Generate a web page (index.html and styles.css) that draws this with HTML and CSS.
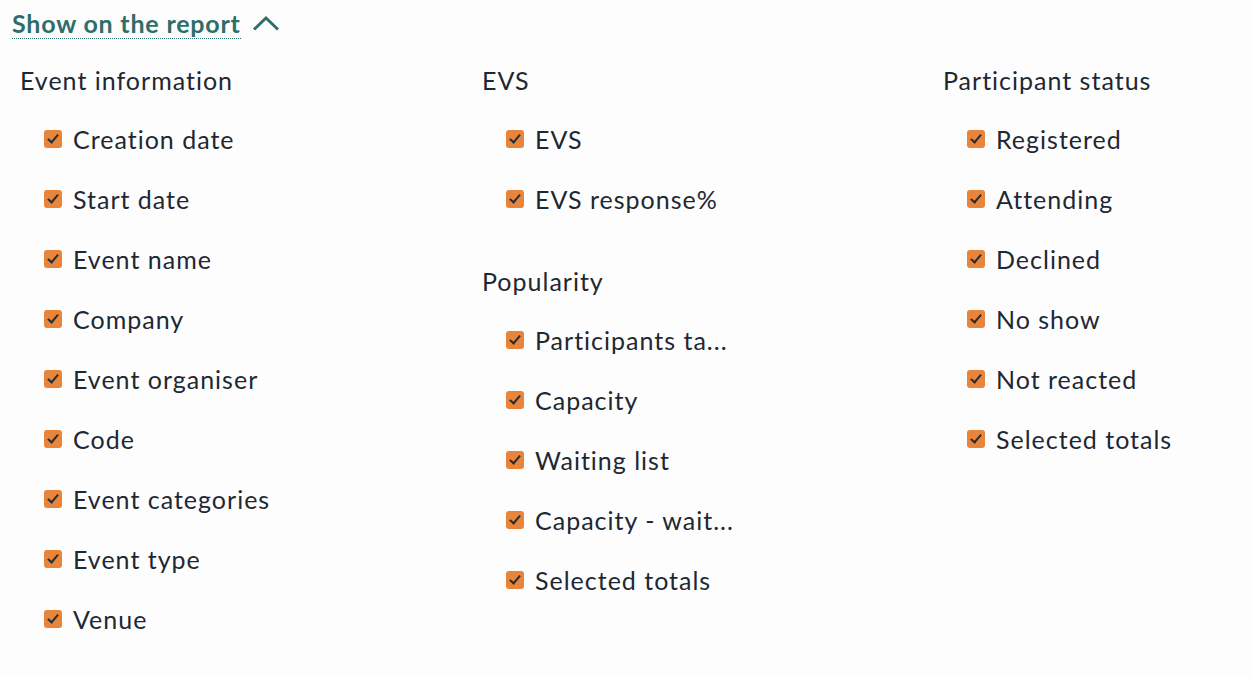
FILE: index.html
```html
<!DOCTYPE html>
<html>
<head>
<meta charset="utf-8">
<link rel="stylesheet" href="styles.css">
</head>
<body>
<div class="page">
  <div class="toggle">
    <span class="toggle-label">Show on the report</span>
    <svg class="chev" width="28" height="16" viewBox="0 0 28 16"><path d="M2 14.5 L14 3 L26 14.5" fill="none" stroke="#2e6e6a" stroke-width="3"/></svg>
  </div>
  <div class="cols">
    <div class="col">
      <div class="group">
        <div class="group-title">Event information</div>
        <div class="item"><span class="cb"></span>Creation date</div>
        <div class="item"><span class="cb"></span>Start date</div>
        <div class="item"><span class="cb"></span>Event name</div>
        <div class="item"><span class="cb"></span>Company</div>
        <div class="item"><span class="cb"></span>Event organiser</div>
        <div class="item"><span class="cb"></span>Code</div>
        <div class="item"><span class="cb"></span>Event categories</div>
        <div class="item"><span class="cb"></span>Event type</div>
        <div class="item"><span class="cb"></span>Venue</div>
      </div>
    </div>
    <div class="col">
      <div class="group">
        <div class="group-title">EVS</div>
        <div class="item"><span class="cb"></span>EVS</div>
        <div class="item"><span class="cb"></span>EVS response%</div>
      </div>
      <div class="group">
        <div class="group-title">Popularity</div>
        <div class="item"><span class="cb"></span>Participants ta...</div>
        <div class="item"><span class="cb"></span>Capacity</div>
        <div class="item"><span class="cb"></span>Waiting list</div>
        <div class="item"><span class="cb"></span>Capacity - wait...</div>
        <div class="item"><span class="cb"></span>Selected totals</div>
      </div>
    </div>
    <div class="col">
      <div class="group">
        <div class="group-title">Participant status</div>
        <div class="item"><span class="cb"></span>Registered</div>
        <div class="item"><span class="cb"></span>Attending</div>
        <div class="item"><span class="cb"></span>Declined</div>
        <div class="item"><span class="cb"></span>No show</div>
        <div class="item"><span class="cb"></span>Not reacted</div>
        <div class="item"><span class="cb"></span>Selected totals</div>
      </div>
    </div>
  </div>
</div>
</body>
</html>
```
FILE: styles.css
```css
html, body {
  margin: 0;
  padding: 0;
  background: #fdfdfd;
}
body {
  font-family: Lato, "Noto Sans", sans-serif;
  color: #1e2833;
}
.page {
  padding: 8px 0 0 12px;
}
.toggle {
  display: flex;
  align-items: center;
  gap: 11px;
  height: 31px;
}
.toggle-label {
  display: inline-block;
  font-size: 25px;
  font-weight: 700;
  letter-spacing: 0.8px;
  line-height: 30px;
  color: #2e6e6a;
  border-bottom: 1px dotted #2e6e6a;
}
.chev {
  display: block;
  margin-top: -1px;
}
.cols {
  display: grid;
  grid-template-columns: 462px 461px 1fr;
  margin-top: 26px;
  padding-left: 8px;
}
.group + .group {
  margin-top: 37px;
}
.group-title {
  font-size: 25px;
  letter-spacing: 1px;
  line-height: 30px;
  margin-bottom: 14px;
}
.item {
  display: flex;
  align-items: center;
  height: 60px;
  padding-left: 24px;
  font-size: 25px;
  letter-spacing: 1px;
  line-height: 30px;
}
.cb {
  flex: none;
  width: 18px;
  height: 18px;
  border-radius: 3px;
  background: #e8853a;
  margin-right: 11px;
  position: relative;
  top: 0;
}
.cb::after {
  content: "";
  position: absolute;
  left: 6px;
  top: 2px;
  width: 4px;
  height: 9px;
  border: solid #2a2e33;
  border-width: 0 2.5px 2.5px 0;
  transform: rotate(40deg);
}
```
